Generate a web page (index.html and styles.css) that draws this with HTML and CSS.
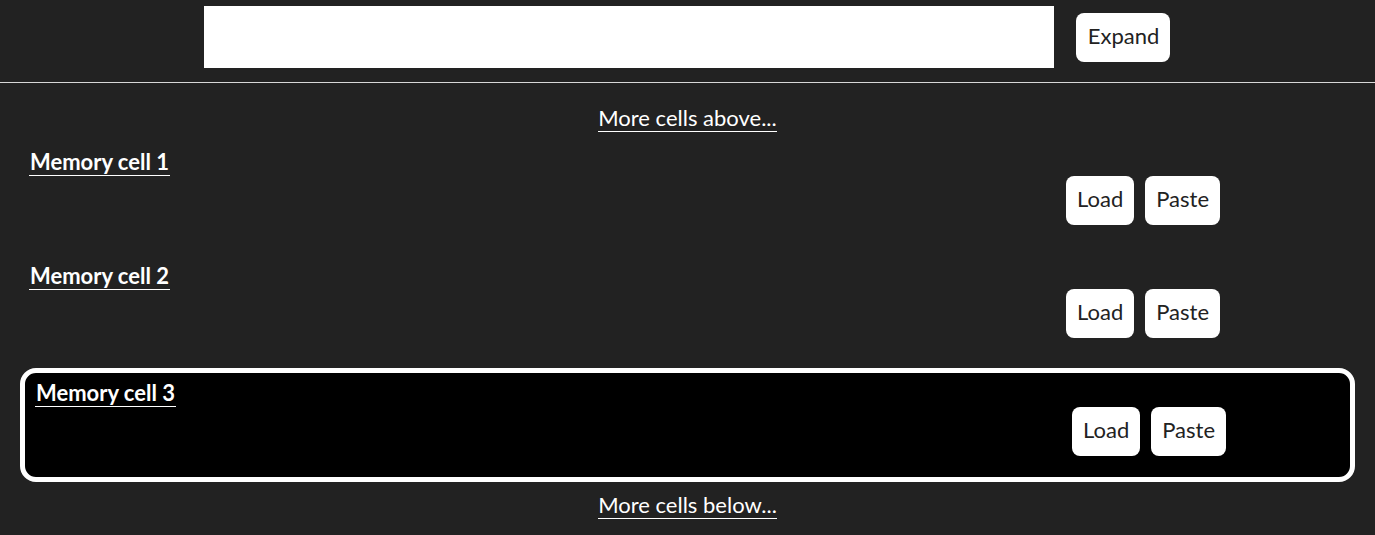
FILE: index.html
```html
<!DOCTYPE html>
<html lang="en">
<head>
<meta charset="utf-8">
<title>Memory cells</title>
<link rel="stylesheet" href="styles.css">
</head>
<body>
<header class="topbar">
  <input class="entry" type="text" aria-label="Input">
  <button class="btn" type="button">Expand</button>
</header>
<main class="cells">
  <div class="more"><a class="more-link" href="#">More cells above...</a></div>
  <div class="cell-list">
    <section class="cell">
      <div class="cell-title"><a class="cell-name" href="#">Memory cell 1</a></div>
      <div class="cell-actions">
        <button class="btn" type="button">Load</button>
        <button class="btn" type="button">Paste</button>
      </div>
    </section>
    <section class="cell">
      <div class="cell-title"><a class="cell-name" href="#">Memory cell 2</a></div>
      <div class="cell-actions">
        <button class="btn" type="button">Load</button>
        <button class="btn" type="button">Paste</button>
      </div>
    </section>
    <section class="cell cell-selected">
      <div class="cell-title"><a class="cell-name" href="#">Memory cell 3</a></div>
      <div class="cell-actions">
        <button class="btn" type="button">Load</button>
        <button class="btn" type="button">Paste</button>
      </div>
    </section>
  </div>
  <div class="more more-below"><a class="more-link" href="#">More cells below...</a></div>
</main>
</body>
</html>
```
FILE: styles.css
```css
html, body {
  margin: 0;
  padding: 0;
}

body {
  background: #222222;
  color: #ffffff;
  font-family: Lato, "Open Sans", "Liberation Sans", sans-serif;
  font-size: 22px;
  height: 535px;
  overflow: hidden;
}

.topbar {
  display: flex;
  justify-content: center;
  align-items: center;
  gap: 22px;
  padding: 6px 0 14px;
  border-bottom: 1px solid #d8d8d8;
}

.entry {
  width: 850px;
  height: 62px;
  box-sizing: border-box;
  border: none;
  margin: 0;
  padding: 0 10px;
  background: #ffffff;
  font: inherit;
  outline: none;
}

.btn {
  font-family: Lato, "Open Sans", "Liberation Sans", sans-serif;
  font-size: 22px;
  line-height: 25px;
  color: #222222;
  background: #ffffff;
  border: none;
  border-radius: 8px;
  padding: 10px 11px 14px;
  margin: 0;
}

.topbar .btn {
  padding: 10px 11px 14px 12px;
  margin-right: 1px;
}

.cells {
  padding-top: 22px;
}

.more {
  text-align: center;
  line-height: 1.2;
  margin-bottom: 11px;
}

.more-below {
  margin: 10px 0 0;
}

.more-link {
  color: #ffffff;
  text-decoration: none;
  border-bottom: 1px solid #ffffff;
}

.cell-list {
  display: flex;
  flex-direction: column;
  gap: 11px;
}

.cell {
  margin: 0 20px;
  padding: 7px 11px 20px 9px;
}

.cell-selected {
  background: #000000;
  border: 5px solid #ffffff;
  border-radius: 16px;
  padding-left: 10px;
  padding-bottom: 21px;
  margin-top: -1px;
}

.cell-title {
  line-height: 1.2;
}

.cell-name {
  color: #ffffff;
  font-weight: 700;
  text-decoration: none;
  border-bottom: 1px solid #ffffff;
  padding: 0 1px;
}

.cell-actions {
  display: flex;
  gap: 11px;
  margin-top: 0;
  padding-left: 1037px;
}
```
